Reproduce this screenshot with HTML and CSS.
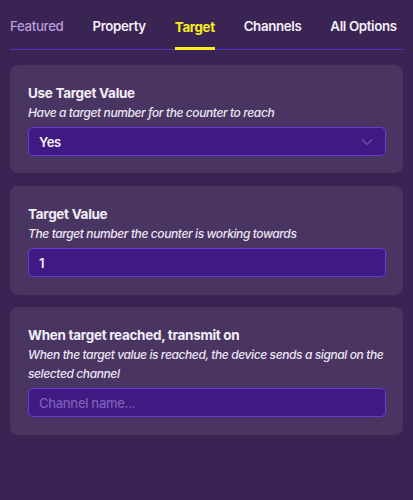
FILE: index.html
```html
<!DOCTYPE html>
<html>
<head>
<meta charset="utf-8">
<link rel="stylesheet" href="styles.css">
</head>
<body>
<div class="page">
  <nav class="tabs">
    <div class="tab tab-featured">Featured</div>
    <div class="tab">Property</div>
    <div class="tab tab-active">Target</div>
    <div class="tab">Channels</div>
    <div class="tab">All Options</div>
  </nav>

  <section class="card card-first">
    <div class="title">Use Target Value</div>
    <div class="desc">Have a target number for the counter to reach</div>
    <div class="field select">
      <span>Yes</span>
      <svg class="chev" width="12" height="8" viewBox="0 0 12 8"><path d="M1 1.5 L6 6.5 L11 1.5" fill="none" stroke="#7456b8" stroke-width="1.1"/></svg>
    </div>
  </section>

  <section class="card">
    <div class="title">Target Value</div>
    <div class="desc">The target number the counter is working towards</div>
    <div class="field"><span>1</span></div>
  </section>

  <section class="card">
    <div class="title">When target reached, transmit on</div>
    <div class="desc">When the target value is reached, the device sends a signal on the selected channel</div>
    <div class="field"><span class="placeholder">Channel name...</span></div>
  </section>
</div>
</body>
</html>
```

FILE: styles.css
```css
html, body {
  margin: 0;
  padding: 0;
}
body {
  width: 413px;
  height: 500px;
  overflow: hidden;
  background: #3a2453;
  font-family: Inter, "Liberation Sans", sans-serif;
  color: #ffffff;
}
.page {
  padding: 0 10px;
  display: flex;
  flex-direction: column;
}
.tabs {
  display: flex;
  justify-content: flex-start;
  gap: 29px;
  align-items: flex-end;
  height: 50px;
  border-bottom: 1px solid #5a2fc4;
  box-sizing: border-box;
}
.tab {
  font-size: 13.3px;
  font-weight: 600;
  letter-spacing: -0.35px;
  color: #f4effa;
  height: 38px;
  box-sizing: border-box;
  padding-top: 7px;
  white-space: nowrap;
}
.tab-featured {
  color: #b69bdc;
  font-weight: 500;
}
.tab-active {
  color: #f8f01e;
  font-weight: 700;
  border-bottom: 3px solid #f8f01e;
  margin-bottom: -1px;
}
.card {
  background: #4a3562;
  border-radius: 8px;
  margin-top: 13px;
  padding: 20px 17px 18px 18px;
  display: flex;
  flex-direction: column;
}
.card-first {
  margin-top: 15px;
  padding-bottom: 17px;
}
.card + .card + .card {
  margin-top: 12px;
}
.title {
  font-size: 13.5px;
  font-weight: 700;
  letter-spacing: -0.3px;
  color: #f3eef8;
  line-height: 17px;
}
.desc {
  font-size: 12px;
  font-style: italic;
  font-weight: 500;
  letter-spacing: -0.4px;
  color: #ece6f4;
  line-height: 19px;
  margin-top: 1px;
}
.field {
  margin-top: 5px;
  height: 29px;
  box-sizing: border-box;
  background: #3f1a82;
  border: 1px solid #6a3ad6;
  border-radius: 5px;
  display: flex;
  align-items: center;
  justify-content: space-between;
  padding: 0 12px 0 10px;
  font-size: 13px;
  font-weight: 600;
  letter-spacing: -0.3px;
  color: #f3eef8;
}
.placeholder {
  color: #7d5eb8;
  font-weight: 500;
}
.chev {
  display: block;
}
```
